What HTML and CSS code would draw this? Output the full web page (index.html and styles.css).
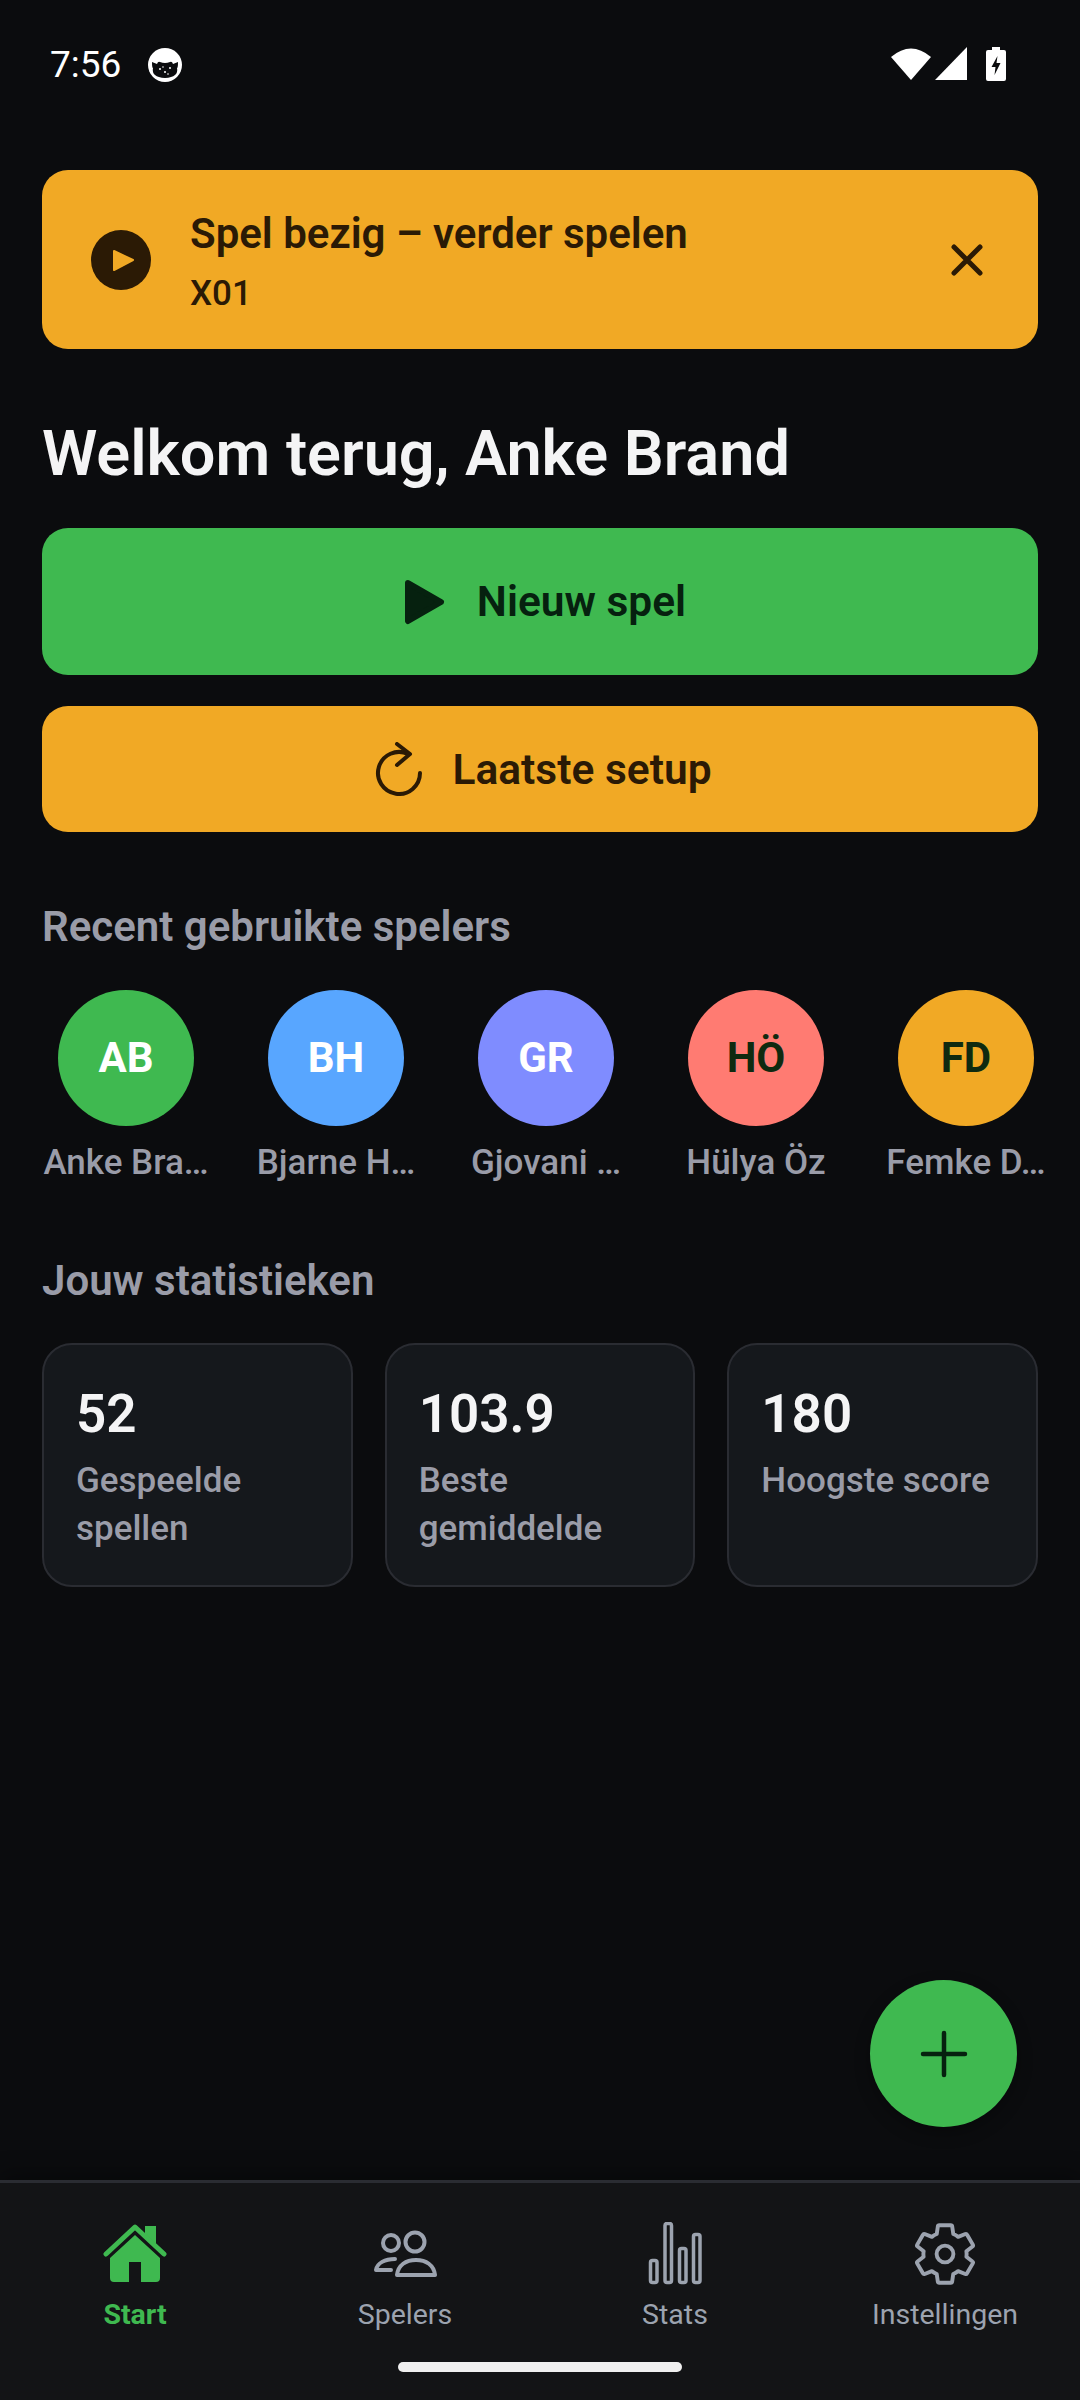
FILE: index.html
```html
<!DOCTYPE html>
<html lang="nl">
<head>
    <meta charset="UTF-8">
    <meta name="viewport" content="width=device-width, initial-scale=1.0">
    <title>Start</title>
    <link rel="stylesheet" href="styles.css">
</head>
<body>
    <div class="screen">
        <!-- Status bar -->
        <div class="status-bar">
            <div class="status-left">
                <span class="status-time">7:56</span>
                <svg class="status-cat" width="34" height="34" viewBox="0 0 34 34">
                    <circle cx="17" cy="17" r="17" fill="#fff"/>
                    <path d="M4 14 Q4 20 5 20 Q3 29 17 30 Q31 29 29 20 Q30 20 30 14 L25 16 Q24 13 22 14 Q17 16 12 14 Q10 13 9 16Z" fill="#0b0c0e"/>
                    <circle cx="12" cy="21" r="1" fill="#fff"/><circle cx="17" cy="24" r="1" fill="#fff"/><circle cx="22" cy="20" r="1" fill="#fff"/><circle cx="15" cy="19" r=".8" fill="#fff"/><circle cx="20" cy="26" r=".8" fill="#fff"/>
                </svg>
            </div>
            <div class="status-right">
                <svg width="40" height="33" viewBox="0 0 40 33"><path d="M0 10 Q20 -7 40 10 L20 33Z" fill="#fff"/></svg>
                <svg width="32" height="33" viewBox="0 0 32 33"><path d="M32 0 V33 H0Z" fill="#fff"/></svg>
                <svg class="status-battery" width="20" height="34" viewBox="0 0 20 34">
                    <path d="M6 0 H14 V3 H18 Q20 3 20 5 V32 Q20 34 18 34 H2 Q0 34 0 32 V5 Q0 3 2 3 H6Z" fill="#fff"/>
                    <path d="M11.5 9 L5.5 20 H9.5 L8.5 28 L14.5 16 H10.5Z" fill="#0b0c0e"/>
                </svg>
            </div>
        </div>

        <main class="content">
            <!-- Running game -->
            <div class="resume-banner">
                <svg class="resume-play" width="60" height="60" viewBox="0 0 60 60">
                    <circle cx="30" cy="30" r="30" fill="#2b1a05"/>
                    <path d="M23 21 L42 30 L23 40Z" fill="#f1a925" stroke="#f1a925" stroke-width="2" stroke-linejoin="round"/>
                </svg>
                <div class="resume-text">
                    <div class="resume-title">Spel bezig – verder spelen</div>
                    <div class="resume-sub">X01</div>
                </div>
                <svg class="resume-close" width="32" height="32" viewBox="0 0 32 32">
                    <path d="M3 3 L29 29 M29 3 L3 29" stroke="#2b1a05" stroke-width="5" stroke-linecap="round"/>
                </svg>
            </div>

            <h1 class="welcome">Welkom terug, Anke Brand</h1>

            <button type="button" class="btn btn-green">
                <svg width="56" height="56" viewBox="0 0 56 56"><path d="M14 9 L47 28 L14 47Z" fill="#06210f" stroke="#06210f" stroke-width="6" stroke-linejoin="round"/></svg>
                <span>Nieuw spel</span>
            </button>
            <button type="button" class="btn btn-orange">
                <svg width="56" height="54" viewBox="-7 0 56 54" fill="none" stroke="#2b1a05" stroke-width="4" stroke-linecap="round" stroke-linejoin="round">
                    <path d="M45 31 A21 21 0 1 1 33 12"/>
                    <path d="M22 2 L35 12 L22 23"/>
                </svg>
                <span>Laatste setup</span>
            </button>

            <h2 class="section-title">Recent gebruikte spelers</h2>
            <div class="players">
                <div class="player"><div class="avatar av-green">AB</div><div class="player-name">Anke Bra…</div></div>
                <div class="player"><div class="avatar av-blue">BH</div><div class="player-name">Bjarne H…</div></div>
                <div class="player"><div class="avatar av-violet">GR</div><div class="player-name">Gjovani …</div></div>
                <div class="player"><div class="avatar av-red">HÖ</div><div class="player-name">Hülya Öz</div></div>
                <div class="player"><div class="avatar av-orange">FD</div><div class="player-name">Femke D…</div></div>
            </div>

            <h2 class="section-title stats-title">Jouw statistieken</h2>
            <div class="stats">
                <div class="stat-card"><div class="stat-value">52</div><div class="stat-label">Gespeelde spellen</div></div>
                <div class="stat-card"><div class="stat-value">103.9</div><div class="stat-label">Beste gemiddelde</div></div>
                <div class="stat-card"><div class="stat-value">180</div><div class="stat-label">Hoogste score</div></div>
            </div>

            <button type="button" class="fab" aria-label="Toevoegen">
                <svg width="48" height="48" viewBox="0 0 48 48"><path d="M24 3 V45 M3 24 H45" stroke="#06210f" stroke-width="4.500" stroke-linecap="round"/></svg>
            </button>
        </main>

        <!-- Bottom navigation -->
        <nav class="bottom-nav">
            <div class="nav-items">
                <div class="nav-item active">
                    <svg width="64" height="64" viewBox="0 0 64 64">
                        <path d="M42 4 H53 V22 L42 12Z" fill="#3fb950"/>
                        <path d="M3 32 L32 5 L61 32" fill="none" stroke="#3fb950" stroke-width="5" stroke-linecap="round" stroke-linejoin="round"/>
                        <path d="M32 13 L57 36 V56 Q57 60 53 60 H38 V40 H26 V60 H11 Q7 60 7 56 V36Z" fill="#3fb950"/>
                    </svg>
                    <span>Start</span>
                </div>
                <div class="nav-item">
                    <svg width="64" height="64" viewBox="0 0 64 64" fill="none" stroke="#9ca3af" stroke-width="4" stroke-linecap="round" stroke-linejoin="round">
                        <circle cx="18" cy="21" r="8"/>
                        <circle cx="42" cy="20" r="9.500"/>
                        <path d="M24 53 C25 43 33 38 43 38 C53 38 61 43 62 53Z"/>
                        <path d="M22 37 C12 37 4 41 3 48 H18"/>
                    </svg>
                    <span>Spelers</span>
                </div>
                <div class="nav-item">
                    <svg width="64" height="64" viewBox="0 0 64 64" fill="none" stroke="#9ca3af" stroke-width="3.500" stroke-linejoin="round">
                        <rect x="7.500" y="38.500" width="6.500" height="22" rx="2"/>
                        <rect x="22" y="1.500" width="6.500" height="59" rx="2"/>
                        <rect x="36.500" y="26.500" width="6.500" height="34" rx="2"/>
                        <rect x="50.500" y="12.500" width="6.500" height="48" rx="2"/>
                    </svg>
                    <span>Stats</span>
                </div>
                <div class="nav-item">
                    <svg width="64" height="64" viewBox="1.330 1.330 21.340 21.340" fill="none" stroke="#9ca3af" stroke-width="1.300" stroke-linejoin="round">
                        <path d="M19.140 12.940c.04-.3.06-.61.06-.94 0-.32-.02-.64-.07-.94l2.030-1.580c.18-.14.23-.41.12-.61l-1.920-3.320c-.12-.22-.37-.29-.59-.22l-2.390.96c-.5-.38-1.030-.7-1.620-.94l-.36-2.540c-.04-.24-.24-.41-.48-.41h-3.840c-.24 0-.43.17-.47.41l-.36 2.540c-.59.24-1.130.57-1.620.94l-2.390-.96c-.22-.08-.47 0-.59.22L2.740 8.870c-.12.21-.08.47.12.61l2.030 1.580c-.05.3-.09.63-.09.94s.02.64.07.94l-2.030 1.580c-.18.14-.23.41-.12.61l1.920 3.320c.12.22.37.29.59.22l2.390-.96c.5.38 1.030.7 1.620.94l.36 2.540c.05.24.24.41.48.41h3.840c.24 0 .44-.17.47-.41l.36-2.540c.59-.24 1.130-.56 1.620-.94l2.390.96c.22.08.47 0 .59-.22l1.920-3.320c.12-.22.07-.47-.12-.61l-2.010-1.580z"/>
                        <circle cx="12" cy="12" r="2.800"/>
                    </svg>
                    <span>Instellingen</span>
                </div>
            </div>
            <div class="home-indicator"></div>
        </nav>
    </div>
</body>
</html>
```

FILE: styles.css
```css
* { box-sizing: border-box; }
body { margin: 0; background-color: #0b0c0e; color: #f4f4f5; font-family: Roboto, "Noto Sans", sans-serif; }
.screen { width: 1080px; height: 2400px; display: flex; flex-direction: column; overflow: hidden; }

.status-bar { height: 170px; flex: none; display: flex; justify-content: space-between; align-items: flex-start; padding: 47px 74px 0 50px; }
.status-left { display: flex; align-items: center; gap: 27px; height: 35px; }
.status-time { font-size: 37px; color: #fff; line-height: 37px; }
.status-right { display: flex; align-items: flex-start; gap: 4px; }
.status-battery { margin-left: 15px; }

.content { flex: 1; position: relative; padding: 0 42px; }

.resume-banner { height: 179px; background-color: #f1a925; border-radius: 26px; display: flex; align-items: center; padding: 0 55px 0 49px; color: #2b1a05; }
.resume-play { flex: none; }
.resume-text { flex: 1; margin-left: 39px; padding-top: 3px; }
.resume-title { font-size: 42px; font-weight: 600; line-height: 50px; margin-bottom: 15px; }
.resume-sub { font-size: 35px; font-weight: 500; line-height: 40px; }
.resume-close { flex: none; }

.welcome { margin: 65px 0 0; font-size: 63px; font-weight: 600; line-height: 80px; color: #f4f4f5; }

.btn { width: 100%; border: none; border-radius: 26px; display: flex; justify-content: center; align-items: center; font-family: inherit; font-size: 42.500px; font-weight: 600; }
.btn-green { height: 147px; margin-top: 34px; background-color: #3fb950; color: #06210f; gap: 27px; }
.btn-orange { height: 126px; margin-top: 31px; background-color: #f1a925; color: #2b1a05; gap: 28px; }

.section-title { margin: 70px 0 0; font-size: 42px; font-weight: 600; line-height: 50px; color: #9a9ca8; }

.players { display: flex; gap: 42px; margin-top: 38px; }
.player { flex: none; width: 168px; display: flex; flex-direction: column; align-items: center; }
.avatar { width: 136px; height: 136px; border-radius: 50%; padding-bottom: 2px; display: flex; justify-content: center; align-items: center; font-size: 42px; font-weight: 700; color: #fff; }
.av-green { background-color: #3fb950; }
.av-blue { background-color: #58a6ff; }
.av-violet { background-color: #7f8cff; }
.av-red { background-color: #ff7b72; color: #0f2a10; }
.av-orange { background-color: #f1a925; color: #0f2a10; }
.player-name { margin-top: 15px; font-size: 35px; font-weight: 500; line-height: 44px; color: #9a9ca8; white-space: nowrap; }

.stats-title { margin-top: 71px; }
.stats { display: grid; grid-template-columns: repeat(3, 1fr); gap: 32px; margin-top: 37px; }
.stat-card { height: 244px; padding: 37px 32px; background-color: #15181c; border: 2px solid #2a2c32; border-radius: 30px; }
.stat-value { font-size: 53px; font-weight: 600; line-height: 64px; color: #f4f4f5; }
.stat-label { margin-top: 11px; font-size: 35px; font-weight: 500; line-height: 48px; color: #9a9ca8; }

.fab { position: absolute; right: 63px; bottom: 53px; width: 147px; height: 147px; border: none; border-radius: 50%; background-color: #3fb950; display: flex; justify-content: center; align-items: center; box-shadow: 0 6px 16px rgba(0,0,0,0.3); }

.bottom-nav { height: 220px; flex: none; background-color: #131416; border-top: 3px solid #2a2c32; box-shadow: 0 -6px 20px rgba(0,0,0,0.35); display: flex; flex-direction: column; align-items: center; padding-top: 39px; }
.nav-items { width: 100%; display: grid; grid-template-columns: repeat(4, 1fr); }
.nav-item { display: flex; flex-direction: column; align-items: center; font-size: 28.500px; line-height: 36px; color: #9ca3af; }
.nav-item span { margin-top: 11px; }
.nav-item.active { color: #3fb950; font-weight: 700; }
.home-indicator { width: 284px; height: 10px; margin-top: 29px; border-radius: 5px; background-color: #f0f0f0; }
```
